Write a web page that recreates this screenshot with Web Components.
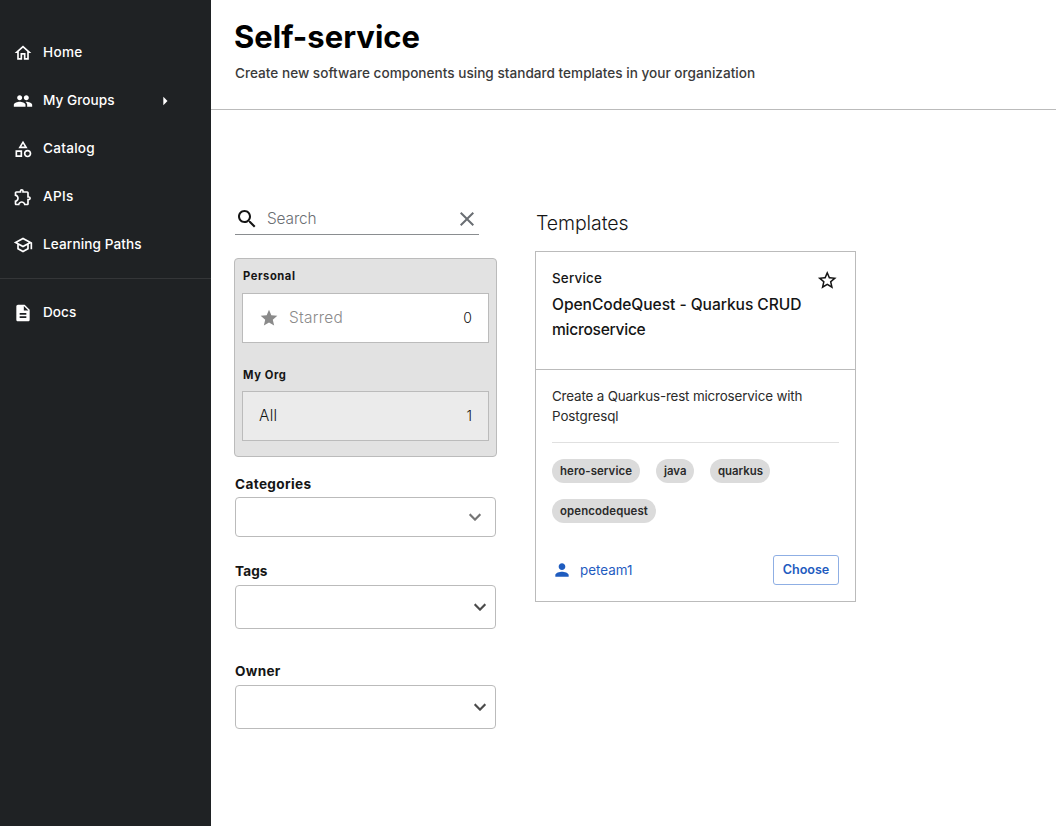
<!DOCTYPE html>
<html lang="en">
<head>
<meta charset="utf-8">
<title>Self-service</title>
<style>
html,body{margin:0;height:100%}
body{font-family:Inter,"Liberation Sans",sans-serif;color:#151515;background:#fff;overflow:hidden}
</style>
</head>
<body>
<app-shell></app-shell>
<script>
const define = (name, html, setup) => {
  const t = document.createElement('template');
  t.innerHTML = html;
  customElements.define(name, class extends HTMLElement {
    connectedCallback() {
      if (this.shadowRoot) return;
      this.attachShadow({mode: 'open'}).append(t.content.cloneNode(true));
      if (setup) setup(this, this.shadowRoot);
    }
  });
};

const ICONS = {
  home: 'M12 5.69l5 4.5V18h-2v-6H9v6H7v-7.81l5-4.5M12 3L2 12h3v8h6v-6h2v6h6v-8h3L12 3z',
  group: 'M16 11c1.66 0 2.99-1.34 2.99-3S17.66 5 16 5c-1.66 0-3 1.34-3 3s1.34 3 3 3zm-8 0c1.66 0 2.99-1.34 2.99-3S9.66 5 8 5C6.34 5 5 6.34 5 8s1.34 3 3 3zm0 2c-2.33 0-7 1.17-7 3.5V19h14v-2.5c0-2.33-4.67-3.5-7-3.5zm8 0c-.29 0-.62.02-.97.05 1.16.84 1.97 1.97 1.97 3.45V19h6v-2.5c0-2.33-4.67-3.5-7-3.5z',
  category: 'm12 2-5.5 9h11L12 2zm0 3.84L13.93 9h-3.87L12 5.84zM17.5 13c-2.49 0-4.5 2.01-4.5 4.5s2.01 4.5 4.5 4.5 4.5-2.01 4.5-4.5-2.01-4.5-4.5-4.5zm0 7c-1.38 0-2.5-1.12-2.5-2.5s1.12-2.5 2.5-2.5 2.5 1.12 2.5 2.5-1.12 2.5-2.5 2.5zM3 21.5h8v-8H3v8zm2-6h4v4H5v-4z',
  extension: 'M10.5 4.5c.28 0 .5.22.5.5v2h6v6h2c.28 0 .5.22.5.5s-.22.5-.5.5h-2v6h-2.12c-.68-1.75-2.39-3-4.38-3s-3.7 1.25-4.38 3H4v-2.12c1.75-.68 3-2.39 3-4.38 0-1.99-1.24-3.7-2.99-4.38L4 7h6V5c0-.28.22-.5.5-.5m0-2C9.12 2.5 8 3.62 8 5H4c-1.1 0-1.99.9-1.99 2v3.8h.29c1.49 0 2.7 1.21 2.7 2.7s-1.21 2.7-2.7 2.7H2V20c0 1.1.9 2 2 2h3.8v-.3c0-1.49 1.21-2.7 2.7-2.7s2.7 1.21 2.7 2.7v.3H17c1.1 0 2-.9 2-2v-4c1.38 0 2.5-1.12 2.5-2.5S20.38 11 19 11V7c0-1.1-.9-2-2-2h-4c0-1.38-1.12-2.5-2.5-2.5z',
  school: 'M12 3L1 9l4 2.18v6L12 21l7-3.82v-6l2-1.09V17h2V9L12 3zm6.82 6L12 12.72 5.18 9 12 5.28 18.82 9zM17 15.99l-5 2.73-5-2.73v-3.72L12 15l5-2.73v3.72z',
  docs: 'M14 2H6c-1.1 0-1.99.9-1.99 2L4 20c0 1.1.89 2 1.99 2H18c1.1 0 2-.9 2-2V8l-6-6zm2 16H8v-2h8v2zm0-4H8v-2h8v2zm-3-5V3.5L18.5 9H13z',
  right: 'm10 17 5-5-5-5v10z',
  search: 'M15.5 14h-.79l-.28-.27C15.41 12.59 16 11.11 16 9.5 16 5.91 13.09 3 9.5 3S3 5.91 3 9.5 5.91 16 9.5 16c1.61 0 3.09-.59 4.23-1.57l.27.28v.79l5 4.99L20.49 19l-4.99-5zm-6 0C7.01 14 5 11.99 5 9.5S7.01 5 9.5 5 14 7.01 14 9.5 11.99 14 9.5 14z',
  clear: 'M19 6.41L17.59 5 12 10.59 6.41 5 5 6.41 10.59 12 5 17.59 6.41 19 12 13.41 17.59 19 19 17.59 13.41 12z',
  star: 'M12 17.27L18.18 21l-1.64-7.03L22 9.24l-7.19-.61L12 2 9.19 8.63 2 9.24l5.46 4.73L5.82 21z',
  starBorder: 'M22 9.24l-7.19-.62L12 2 9.19 8.63 2 9.24l5.46 4.73L5.82 21 12 17.27 18.18 21l-1.63-7.03L22 9.24zM12 15.4l-3.76 2.27 1-4.28-3.32-2.88 4.38-.38L12 6.1l1.71 4.04 4.38.38-3.32 2.88 1 4.28L12 15.4z',
  down: 'M16.59 8.59L12 13.17 7.41 8.59 6 10l6 6 6-6z',
  person: 'M12 12c2.21 0 4-1.79 4-4s-1.79-4-4-4-4 1.79-4 4 1.79 4 4 4zm0 2c-2.67 0-8 1.34-8 4v2h16v-2c0-2.66-5.33-4-8-4z'
};

define('ui-icon', `<style>:host{display:block;flex:none;line-height:0}svg{display:block;fill:currentColor;stroke:currentColor;stroke-width:var(--icon-stroke,0)}</style><svg viewBox="0 0 24 24"><path/></svg>`, (h, r) => {
  const s = h.getAttribute('size') || 20, svg = r.querySelector('svg');
  svg.setAttribute('width', s); svg.setAttribute('height', s);
  r.querySelector('path').setAttribute('d', ICONS[h.getAttribute('name')]);
});

/* One line of text, tracked so that its glyphs take the width given in "w". */
define('ui-text', `<style>:host{display:block;white-space:nowrap}span{display:inline-block}</style><span><slot></slot></span>`, (h, r) => {
  const span = r.querySelector('span'), w = +h.getAttribute('w');
  if (w) span.style.letterSpacing = ((w - span.getBoundingClientRect().width) / h.textContent.length).toFixed(3) + 'px';
});

define('nav-item', `<style>
:host{display:flex;align-items:center;height:48px;padding:0 0 0 13px;color:#fff;font-size:13.6px;font-weight:500;line-height:20px}
ui-icon{margin:2px 10px 0 0}
.more{margin:2px 0 0 auto;padding-right:36px}
</style><ui-icon class="lead"></ui-icon><slot></slot>`, (h, r) => {
  const old = r.querySelector('.lead');
  const i = document.createElement('ui-icon');
  i.setAttribute('name', h.getAttribute('icon'));
  old.replaceWith(i);
  if (h.hasAttribute('more')) {
    const m = document.createElement('ui-icon');
    m.className = 'more'; m.setAttribute('name', 'right');
    r.append(m);
  }
});

define('side-nav', `<style>
:host{display:block;box-sizing:border-box;background:#1f2224;padding-top:28px}
hr{margin:10px 0 9px;border:0;height:1px;background:#343638}
</style>
<nav-item icon="home"><ui-text w="39.5">Home</ui-text></nav-item>
<nav-item icon="group" more><ui-text w="71.5">My Groups</ui-text></nav-item>
<nav-item icon="category"><ui-text w="52">Catalog</ui-text></nav-item>
<nav-item icon="extension"><ui-text w="30.5">APIs</ui-text></nav-item>
<nav-item icon="school"><ui-text w="98.8">Learning Paths</ui-text></nav-item>
<hr>
<nav-item icon="docs"><ui-text w="33.3">Docs</ui-text></nav-item>`);

define('page-header', `<style>
:host{display:block;box-sizing:border-box;height:110px;padding:16px 24px 0;border-bottom:1px solid #bbb}
h1{margin:0 0 0 -1px;font-size:31px;line-height:42px;font-weight:700;color:#000}
p{margin:5px 0 0;font-size:13.6px;line-height:20px;font-weight:500;color:#3a3a3a}
</style><h1><ui-text w="186">Self-service</ui-text></h1>
<p><ui-text w="520.2">Create new software components using standard templates in your organization</ui-text></p>`);

define('search-field', `<style>
:host{display:flex;align-items:center;box-sizing:border-box;width:244px;height:32px;border-bottom:1px solid #8a8d90;color:#6a6e73;font-size:15.4px;line-height:20px;font-weight:300}
.q{color:#151515;margin-right:8px}.x{margin-left:auto}
</style><ui-icon class="q" name="search" size="24"></ui-icon><ui-text w="49.5">Search</ui-text><ui-icon class="x" name="clear" size="24"></ui-icon>`);

define('filter-row', `<style>
:host{display:flex;align-items:center;box-sizing:border-box;height:50px;padding:0 16px;border:1px solid #bbb;background:#fff;font-size:15.4px;font-weight:300;line-height:20px}
:host([selected]){background:#ebebeb}
.n{margin-left:auto;font-size:14px;font-weight:300}
</style><slot></slot><span class="n"><slot name="count"></slot></span>`);

define('filter-panel', `<style>
:host{display:block;box-sizing:border-box;width:263px;height:199px;margin:23px 0 0 -1px;padding:9px 7px 0;border:1px solid #bbb;border-radius:4px;background:#e2e2e2}
h4{margin:0 1px 9px;font-size:11.2px;line-height:16px;font-weight:700}
filter-row+h4{margin-top:24px;margin-bottom:8px}
.off{display:flex;align-items:center;gap:10px;color:#8a8a8a}
</style>
<h4><ui-text w="52.5">Personal</ui-text></h4>
<filter-row><span class="off"><ui-icon name="star"></ui-icon><ui-text w="54">Starred</ui-text></span><span slot="count">0</span></filter-row>
<h4><ui-text w="43.5">My Org</ui-text></h4>
<filter-row selected><ui-text w="18.5">All</ui-text><span slot="count">1</span></filter-row>`);

define('select-field', `<style>
:host{display:block;width:261px}
h4{margin:0 0 4px;font-size:13.6px;line-height:20px;font-weight:700}
.box{display:flex;align-items:center;justify-content:flex-end;box-sizing:border-box;height:44px;padding-right:3px;border:1px solid #bbb;border-radius:4px;color:#4a4a4a;--icon-stroke:.2}
:host([compact]) h4{margin-bottom:3px}
:host([compact]) .box{height:40px;padding-right:8px;color:#757575}
</style><h4><slot></slot></h4><div class="box"><ui-icon name="down" size="24"></ui-icon></div>`);

define('tag-chip', `<style>
:host{display:flex;align-items:center;box-sizing:border-box;height:24px;padding-left:8px;border-radius:12px;background:#dbdbdb;color:#2a2a2a;font-size:11.4px;font-weight:600;line-height:16px}
</style><slot></slot>`, h => { h.style.width = h.getAttribute('size') + 'px'; });

define('template-card', `<style>
:host{display:block;box-sizing:border-box;width:321px;height:351px;border:1px solid #bbb;background:#fff}
header{display:flex;justify-content:space-between;box-sizing:border-box;height:118px;padding:16px 17px 0 16px;border-bottom:1px solid #bbb}
.kind{font-size:13.4px;font-weight:500;line-height:20px;margin-bottom:4px}
.name{font-size:15.6px;line-height:25px;font-weight:500}
.body{padding:16px 16px 0}
.desc{font-size:13.4px;line-height:20px;font-weight:400;color:#2b2b2b;padding-bottom:16px;border-bottom:1px solid #e0e0e0}
.tags{display:flex;flex-wrap:wrap;gap:16px;margin-top:16px}
footer{display:flex;align-items:center;justify-content:space-between;margin-top:32px;color:#1f5cbf}
.owner{display:flex;align-items:center;gap:8px;font-size:13.4px;line-height:20px;font-weight:400}
.btn{display:flex;align-items:center;justify-content:center;box-sizing:border-box;width:66px;height:30px;padding-bottom:1px;border:1px solid #8fafe4;border-radius:3px;font-size:12.6px;font-weight:600;line-height:16px}
.fav{padding-top:.8px}
</style>
<header><div><ui-text class="kind" w="50">Service</ui-text><ui-text class="name" w="249.5">OpenCodeQuest - Quarkus CRUD</ui-text><ui-text class="name" w="93.5">microservice</ui-text></div>
<ui-icon class="fav" name="starBorder" size="22.5"></ui-icon></header>
<div class="body">
<div class="desc"><ui-text w="250.3">Create a Quarkus-rest microservice with</ui-text><ui-text w="66.5">Postgresql</ui-text></div>
<div class="tags"><tag-chip size="88"><ui-text w="72">hero-service</ui-text></tag-chip><tag-chip size="38"><ui-text w="22.5">java</ui-text></tag-chip><tag-chip size="60"><ui-text w="45">quarkus</ui-text></tag-chip><tag-chip size="104"><ui-text w="88">opencodequest</ui-text></tag-chip></div>
<footer><span class="owner"><ui-icon name="person"></ui-icon><ui-text w="52.5">peteam1</ui-text></span><span class="btn"><ui-text w="46.5">Choose</ui-text></span></footer>
</div>`);

define('app-shell', `<style>
:host{display:grid;grid-template-columns:211px 1fr;height:100vh;min-height:826px}
.content{display:grid;grid-template-columns:261px 321px;column-gap:39px;padding:93px 24px 0}
.filters{display:flex;flex-direction:column}
.cat{margin-top:17px}.tag{margin-top:24px}.own{margin-top:32px}
h2{margin:7px 0 14px 1px;font-size:19.5px;line-height:27px;font-weight:300}
</style>
<side-nav></side-nav>
<main><page-header></page-header>
<div class="content">
<div class="filters"><search-field></search-field><filter-panel></filter-panel>
<select-field class="cat" compact><ui-text w="76.5">Categories</ui-text></select-field>
<select-field class="tag"><ui-text w="32.5">Tags</ui-text></select-field>
<select-field class="own"><ui-text w="45.7">Owner</ui-text></select-field></div>
<div><h2><ui-text w="92.5">Templates</ui-text></h2><template-card></template-card></div>
</div></main>`);
</script>
</body>
</html>
